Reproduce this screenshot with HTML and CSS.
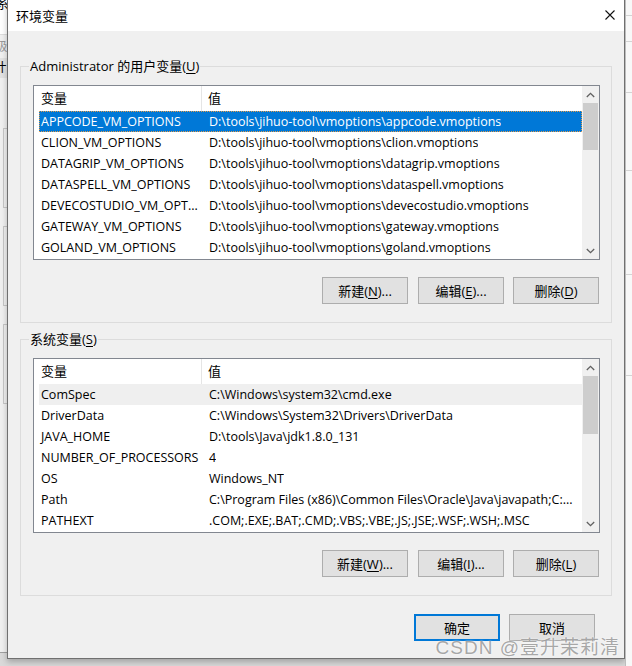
FILE: index.html
```html
<!DOCTYPE html>
<html lang="zh-CN">
<head>
    <meta charset="UTF-8">
    <title>环境变量</title>
    <link rel="stylesheet" href="styles.css">
</head>
<body>
<div class="desk">
    <div class="back-left">
        <div class="bl-top">系</div>
        <div class="bl-tab">级</div>
        <div class="bl-bar">计</div>
        <div class="bl-box"></div>
        <div class="bl-box"></div>
        <div class="bl-box"></div>
    </div>

    <div class="dialog">
        <div class="titlebar">
            <span class="title">环境变量</span>
            <svg class="close" width="10" height="10" viewBox="0 0 10 10">
                <path d="M0.5 0.5 L9.5 9.5 M9.5 0.5 L0.5 9.5" stroke="#111" stroke-width="1.1" fill="none"/>
            </svg>
        </div>

        <div class="group">
            <div class="group-label">Administrator 的用户变量(<u>U</u>)</div>
            <div class="list">
                <div class="cols">
                    <div class="row head">
                        <div class="c1">变量</div>
                        <div class="c2">值</div>
                    </div>
                    <div class="row selected">
                        <div class="c1">APPCODE_VM_OPTIONS</div>
                        <div class="c2">D:\tools\jihuo-tool\vmoptions\appcode.vmoptions</div>
                    </div>
                    <div class="row">
                        <div class="c1">CLION_VM_OPTIONS</div>
                        <div class="c2">D:\tools\jihuo-tool\vmoptions\clion.vmoptions</div>
                    </div>
                    <div class="row">
                        <div class="c1">DATAGRIP_VM_OPTIONS</div>
                        <div class="c2">D:\tools\jihuo-tool\vmoptions\datagrip.vmoptions</div>
                    </div>
                    <div class="row">
                        <div class="c1">DATASPELL_VM_OPTIONS</div>
                        <div class="c2">D:\tools\jihuo-tool\vmoptions\dataspell.vmoptions</div>
                    </div>
                    <div class="row">
                        <div class="c1">DEVECOSTUDIO_VM_OPT...</div>
                        <div class="c2">D:\tools\jihuo-tool\vmoptions\devecostudio.vmoptions</div>
                    </div>
                    <div class="row">
                        <div class="c1">GATEWAY_VM_OPTIONS</div>
                        <div class="c2">D:\tools\jihuo-tool\vmoptions\gateway.vmoptions</div>
                    </div>
                    <div class="row">
                        <div class="c1">GOLAND_VM_OPTIONS</div>
                        <div class="c2">D:\tools\jihuo-tool\vmoptions\goland.vmoptions</div>
                    </div>
                </div>
                <div class="vscroll">
                    <svg class="arrow" width="9" height="6" viewBox="0 0 9 6"><path d="M0.8 5 L4.5 1.3 L8.2 5" stroke="#606060" stroke-width="1.3" fill="none"/></svg>
                    <div class="track">
                        <div class="thumb user-thumb"></div>
                    </div>
                    <svg class="arrow" width="9" height="6" viewBox="0 0 9 6"><path d="M0.8 1 L4.5 4.7 L8.2 1" stroke="#606060" stroke-width="1.3" fill="none"/></svg>
                </div>
            </div>
            <div class="buttons">
                <button>新建(<u>N</u>)...</button>
                <button>编辑(<u>E</u>)...</button>
                <button>删除(<u>D</u>)</button>
            </div>
        </div>

        <div class="group">
            <div class="group-label">系统变量(<u>S</u>)</div>
            <div class="list">
                <div class="cols">
                    <div class="row head">
                        <div class="c1">变量</div>
                        <div class="c2">值</div>
                    </div>
                    <div class="row hover">
                        <div class="c1">ComSpec</div>
                        <div class="c2">C:\Windows\system32\cmd.exe</div>
                    </div>
                    <div class="row">
                        <div class="c1">DriverData</div>
                        <div class="c2">C:\Windows\System32\Drivers\DriverData</div>
                    </div>
                    <div class="row">
                        <div class="c1">JAVA_HOME</div>
                        <div class="c2">D:\tools\Java\jdk1.8.0_131</div>
                    </div>
                    <div class="row">
                        <div class="c1">NUMBER_OF_PROCESSORS</div>
                        <div class="c2">4</div>
                    </div>
                    <div class="row">
                        <div class="c1">OS</div>
                        <div class="c2">Windows_NT</div>
                    </div>
                    <div class="row">
                        <div class="c1">Path</div>
                        <div class="c2">C:\Program Files (x86)\Common Files\Oracle\Java\javapath;C:...</div>
                    </div>
                    <div class="row">
                        <div class="c1">PATHEXT</div>
                        <div class="c2">.COM;.EXE;.BAT;.CMD;.VBS;.VBE;.JS;.JSE;.WSF;.WSH;.MSC</div>
                    </div>
                </div>
                <div class="vscroll">
                    <svg class="arrow" width="9" height="6" viewBox="0 0 9 6"><path d="M0.8 5 L4.5 1.3 L8.2 5" stroke="#606060" stroke-width="1.3" fill="none"/></svg>
                    <div class="track">
                        <div class="thumb sys-thumb"></div>
                    </div>
                    <svg class="arrow" width="9" height="6" viewBox="0 0 9 6"><path d="M0.8 1 L4.5 4.7 L8.2 1" stroke="#606060" stroke-width="1.3" fill="none"/></svg>
                </div>
            </div>
            <div class="buttons">
                <button>新建(<u>W</u>)...</button>
                <button>编辑(<u>I</u>)...</button>
                <button>删除(<u>L</u>)</button>
            </div>
        </div>

        <div class="footer">
            <button class="default">确定</button>
            <button>取消</button>
        </div>
    </div>

    <div class="back-right">
        <div style="height:15px"></div>
        <div style="height:25px"></div>
        <div style="height:50px"></div>
        <div style="height:77px"></div>
        <div style="height:103px"></div>
        <div style="height:100px"></div>
    </div>

    <div class="watermark">CSDN @壹升茉莉清</div>
</div>
</body>
</html>
```

FILE: styles.css
```css
body {
    margin: 0;
    background-color: #e6e6e6;
    font-family: "Open Sans", "Noto Sans CJK SC", sans-serif;
    font-size: 12.5px;
    color: #000;
}
.desk {
    position: relative;
    display: flex;
    width: 632px;
    height: 666px;
    overflow: hidden;
    background: #d9d9d9;
}

/* window behind the dialog */
.back-left {
    width: 7px;
    flex: none;
    background: #f0f0f0;
    overflow: hidden;
    height: 652px;
    border-bottom: 1px solid #a0a0a0;
}
.bl-top {
    height: 34px;
    background: #fff;
    border-bottom: 1px solid #ddd;
    line-height: 6px;
    font-size: 13px;
    margin-left: -4px;
}
.bl-tab {
    height: 23px;
    color: #9a9a9a;
    line-height: 23px;
    margin-left: -5px;
}
.bl-bar {
    height: 20px;
    background: #e2e2e2;
    line-height: 20px;
    margin-left: -6px;
}
.bl-box {
    height: 78px;
    margin: 50px 0 -32px 3px;
    border: 1px solid #c8c8c8;
    border-right: none;
}
.back-right {
    width: 7px;
    flex: none;
    background: #f8f8f8;
    border-left: 1px solid #bdbdbd;
    box-sizing: border-box;
}
.back-right div {
    border-bottom: 1px solid #d4d4d4;
}

/* dialog */
.dialog {
    width: 618px;
    height: 659px;
    flex: none;
    box-sizing: border-box;
    background: #f0f0f0;
    border: 1px solid #707070;
    border-top: none;
    box-shadow: 0 3px 6px rgba(0, 0, 0, 0.25);
    display: flex;
    flex-direction: column;
}
.titlebar {
    height: 31px;
    flex: none;
    background: #fff;
    display: flex;
    align-items: center;
    justify-content: space-between;
    padding: 0 9px 0 8px;
}
.title {
    font-size: 13px;
    margin-top: -1px;
}
.close {
    margin-top: -1px;
}

.group {
    margin: 35px 12px 0 12px;
    border: 1px solid #dcdcdc;
    padding: 0 11px 18px 12px;
}
.group + .group {
    margin-top: 16px;
}
.group-label {
    width: max-content;
    margin: -9px 0 0 -4px;
    padding: 0 1px;
    height: 17px;
    line-height: 17px;
    font-size: 13px;
    background: #f0f0f0;
}
u {
    text-decoration-thickness: 1px;
    text-underline-offset: 2px;
}

.list {
    margin-top: 10px;
    height: 175px;
    box-sizing: border-box;
    border: 1px solid #828790;
    background: #fff;
    display: flex;
}
.cols {
    flex: 1;
    overflow: hidden;
}
.row {
    display: flex;
    height: 21px;
    line-height: 21px;
    margin-left: 5px;
    white-space: nowrap;
}
.row .c1 {
    width: 161px;
    padding-left: 2px;
    flex: none;
    overflow: hidden;
}
.row .c2 {
    padding-left: 7px;
    overflow: hidden;
}
.row.head {
    height: 25px;
    line-height: 25px;
    font-size: 13px;
}
.row.head .c1 {
    border-right: 1px solid #e5e5e5;
    width: 160px;
}
.row.head .c2 {
    padding-left: 6px;
}
.row.selected {
    background: #0078d7;
    color: #fff;
    outline: 1px dotted #e39c4b;
    outline-offset: -1px;
}
.row.hover {
    background: #efefef;
}

.vscroll {
    width: 17px;
    flex: none;
    background: #f0f0f0;
    display: flex;
    flex-direction: column;
    align-items: center;
}
.vscroll .arrow {
    flex: none;
    margin: 6px 0 5px;
}
.track {
    flex: 1;
    width: 100%;
}
.thumb {
    margin: 0 1px;
    background: #cdcdcd;
}
.user-thumb {
    height: 47px;
}
.sys-thumb {
    height: 58px;
}

.buttons {
    margin-top: 17px;
    display: flex;
    justify-content: flex-end;
    gap: 9px;
    padding-right: 1px;
}
button {
    width: 86px;
    height: 27px;
    box-sizing: border-box;
    background: #e1e1e1;
    border: 1px solid #adadad;
    border-radius: 0;
    font-family: "Open Sans", "Noto Sans CJK SC", sans-serif;
    font-size: 13px;
    color: #000;
    padding: 0;
}
.buttons button:first-child {
    margin-right: 1px;
}
.footer {
    margin-top: 18px;
    display: flex;
    justify-content: flex-end;
    gap: 9px;
    padding-right: 29px;
}
button.default {
    border: 2px solid #0078d7;
}

.watermark {
    position: absolute;
    right: 12px;
    bottom: 7px;
    font-family: "Liberation Sans", "Noto Sans CJK SC", sans-serif;
    font-size: 19px;
    color: rgba(140, 140, 140, 0.75);
    text-shadow: 0 0 2px #fff;
    letter-spacing: 1px;
}
```
